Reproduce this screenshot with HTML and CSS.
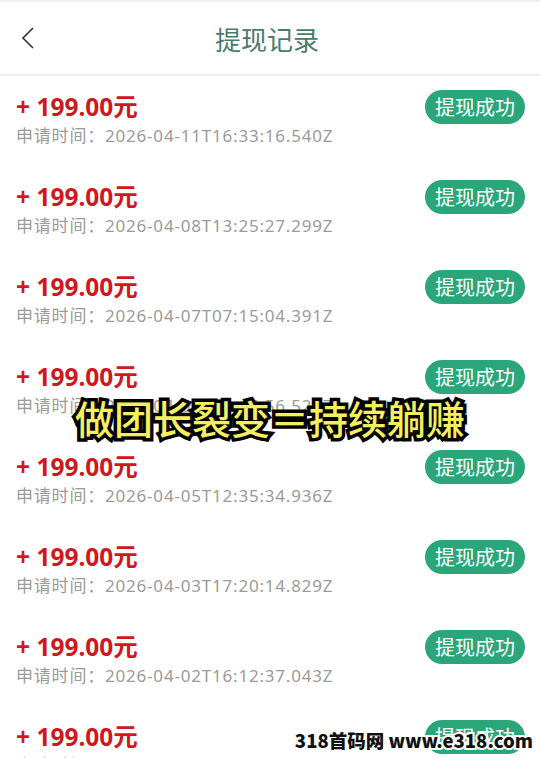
FILE: index.html
```html
<!DOCTYPE html>
<html>
<head>
  <meta charset="utf-8">
  <title>提现记录</title>
  <link rel="stylesheet" href="styles.css">
</head>
<body>
  <div class="page">
    <div class="header">
      <svg class="back" width="14" height="22" viewBox="0 0 14 22">
        <polyline points="12,1 2,11 12,21" fill="none" stroke="#333" stroke-width="1.6"/>
      </svg>
      <h1>提现记录</h1>
    </div>

    <div class="list">
      <div class="row">
        <div class="info">
          <div class="amount">+ 199.00元</div>
          <div class="time">申请时间：2026-04-11T16:33:16.540Z</div>
        </div>
        <span class="badge">提现成功</span>
      </div>
      <div class="row">
        <div class="info">
          <div class="amount">+ 199.00元</div>
          <div class="time">申请时间：2026-04-08T13:25:27.299Z</div>
        </div>
        <span class="badge">提现成功</span>
      </div>
      <div class="row">
        <div class="info">
          <div class="amount">+ 199.00元</div>
          <div class="time">申请时间：2026-04-07T07:15:04.391Z</div>
        </div>
        <span class="badge">提现成功</span>
      </div>
      <div class="row">
        <div class="info">
          <div class="amount">+ 199.00元</div>
          <div class="time">申请时间：2026-04-06T10:46:56.528Z</div>
        </div>
        <span class="badge">提现成功</span>
      </div>
      <div class="row">
        <div class="info">
          <div class="amount">+ 199.00元</div>
          <div class="time">申请时间：2026-04-05T12:35:34.936Z</div>
        </div>
        <span class="badge">提现成功</span>
      </div>
      <div class="row">
        <div class="info">
          <div class="amount">+ 199.00元</div>
          <div class="time">申请时间：2026-04-03T17:20:14.829Z</div>
        </div>
        <span class="badge">提现成功</span>
      </div>
      <div class="row">
        <div class="info">
          <div class="amount">+ 199.00元</div>
          <div class="time">申请时间：2026-04-02T16:12:37.043Z</div>
        </div>
        <span class="badge">提现成功</span>
      </div>
      <div class="row">
        <div class="info">
          <div class="amount">+ 199.00元</div>
          <div class="time">申请时间：2026-04-01T09:08:22.117Z</div>
        </div>
        <span class="badge">提现成功</span>
      </div>
    </div>

    <div class="caption">做团长裂变＝持续躺赚</div>
    <div class="watermark">318首码网 www.e318.com</div>
  </div>
</body>
</html>
```

FILE: styles.css
```css
body {
  margin: 0;
  background: #fff;
  font-family: "Noto Sans CJK SC", "Noto Sans", sans-serif;
  overflow: hidden;
}
.page {
  position: relative;
  width: 540px;
  height: 758px;
  overflow: hidden;
}
.header {
  height: 72px;
  border-top: 2px solid #efefef;
  border-bottom: 2px solid #efefef;
  display: flex;
  align-items: center;
  justify-content: center;
  position: relative;
}
.back {
  position: absolute;
  left: 21px;
  top: 25px;
}
h1 {
  margin: 0 6px 0 0;
  font-size: 26px;
  font-weight: 400;
  color: #4b7a6c;
}
.row {
  display: flex;
  justify-content: space-between;
  align-items: flex-start;
  padding: 16px 15px 16px 16px;
  height: 58px;
}
.amount {
  font-family: "Noto Sans", "Noto Sans CJK SC", sans-serif;
  font-size: 24.5px;
  line-height: 30px;
  font-weight: 700;
  color: #d2161e;
}
.time {
  font-family: "Noto Sans", "Noto Sans CJK SC", sans-serif;
  font-size: 17px;
  line-height: 28px;
  letter-spacing: 0.8px;
  color: #9b9b9b;
}
.badge {
  margin-top: -2px;
  width: 100px;
  height: 34px;
  line-height: 34px;
  border-radius: 17px;
  background: #2aa67a;
  color: #fff;
  font-size: 20px;
  text-align: center;
}
.caption {
  position: absolute;
  left: 0;
  right: 0;
  top: 390px;
  text-align: center;
  font-size: 39px;
  line-height: 54px;
  font-weight: 500;
  color: #f4ef5c;
  -webkit-text-stroke: 7px #000;
  paint-order: stroke fill;
}
.watermark {
  position: absolute;
  right: 7px;
  bottom: 6px;
  font-size: 18.5px;
  line-height: 24px;
  font-weight: 900;
  color: #111;
  -webkit-text-stroke: 4px #fff;
  paint-order: stroke fill;
}
```
